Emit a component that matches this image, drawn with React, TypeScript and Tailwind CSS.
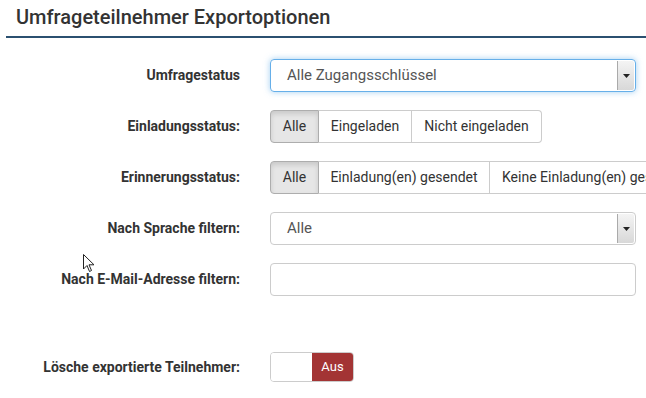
import React from "react";

const Label = ({ children }: { children: React.ReactNode }) => (
  <div className="w-[240px] shrink-0 text-right text-[14px] font-bold text-[#333] whitespace-nowrap">{children}</div>
);

const Caret = () => (
  <div className="absolute right-[1px] top-[1px] bottom-[1px] w-[17px] border-l border-[#aaa] bg-gradient-to-b from-[#f4f4f4] to-[#d8d8d8] flex items-center justify-center rounded-r-[2px]">
    <svg width="7" height="4" viewBox="0 0 7 4"><path d="M0 0h7L3.5 4z" fill="#222" /></svg>
  </div>
);

export default function App() {
  return (
    <div className="relative w-[646px] h-[398px] overflow-hidden bg-white" style={{ fontFamily: "Roboto, 'Liberation Sans', sans-serif" }}>
      <div className="pl-[6px]">
        <div className="pl-[10px] pt-[4px] h-[36px] text-[20px] font-medium text-[#333] leading-[26px] whitespace-nowrap">Umfrageteilnehmer Exportoptionen</div>
        <div className="h-[2px] bg-[#2b5070]" />
      </div>
      <div className="flex flex-col pt-[21px]">
        <div className="flex items-center h-[33px] gap-[30px]">
          <Label>Umfragestatus</Label>
          <div className="relative w-[366px] h-[33px] rounded-[4px] border border-[#66afe9] shadow-[0_0_6px_rgba(102,175,233,0.6)] flex items-center pl-[16px] text-[15px] text-[#555]">
            Alle Zugangsschlüssel
            <Caret />
          </div>
        </div>
        <div className="flex items-center h-[33px] gap-[30px] mt-[18px]">
          <Label>Einladungsstatus:</Label>
          <div className="flex h-[33px] text-[14px] text-[#333] whitespace-nowrap">
            <div className="w-[49px] flex items-center justify-center bg-[#e6e6e6] border border-[#adadad] rounded-l-[4px] shadow-[inset_0_3px_5px_rgba(0,0,0,0.125)]">Alle</div>
            <div className="w-[93px] flex items-center justify-center border-y border-r border-[#ccc]">Eingeladen</div>
            <div className="w-[130px] flex items-center justify-center border-y border-r border-[#ccc] rounded-r-[4px]">Nicht eingeladen</div>
          </div>
        </div>
        <div className="flex items-center h-[33px] gap-[30px] mt-[18px]">
          <Label>Erinnerungsstatus:</Label>
          <div className="flex h-[33px] w-[376px] overflow-hidden text-[14px] text-[#333] whitespace-nowrap">
            <div className="w-[49px] shrink-0 flex items-center justify-center bg-[#e6e6e6] border border-[#adadad] rounded-l-[4px] shadow-[inset_0_3px_5px_rgba(0,0,0,0.125)]">Alle</div>
            <div className="w-[171px] shrink-0 flex items-center justify-center border-y border-r border-[#ccc]">Einladung(en) gesendet</div>
            <div className="w-[210px] shrink-0 flex items-center pl-[12px] border-y border-r border-[#ccc] rounded-r-[4px]">Keine Einladung(en) gesendet</div>
          </div>
        </div>
        <div className="flex items-center h-[33px] gap-[30px] mt-[18px]">
          <Label>Nach Sprache filtern:</Label>
          <div className="relative w-[366px] h-[33px] rounded-[4px] border border-[#ccc] flex items-center pl-[16px] text-[15px] text-[#555]">
            Alle
            <Caret />
          </div>
        </div>
        <div className="flex items-center h-[33px] gap-[30px] mt-[18px]">
          <Label>Nach E-Mail-Adresse filtern:</Label>
          <div className="w-[366px] h-[33px] rounded-[4px] border border-[#ccc]" />
        </div>
        <div className="flex items-center h-[30px] gap-[30px] mt-[56px]">
          <Label>Lösche exportierte Teilnehmer:</Label>
          <div className="flex w-[84px] h-[30px] rounded-[4px] border border-[#ccc] overflow-hidden">
            <div className="w-[41px] bg-white" />
            <div className="flex-1 bg-[#a33434] text-white text-[13px] flex items-center justify-center">Aus</div>
          </div>
        </div>
      </div>
      <svg className="absolute left-[83px] top-[254px]" width="12" height="19" viewBox="0 0 12 19">
        <path d="M0.5 0.5 L0.5 15 L4 11.5 L6.5 17.5 L8.5 16.5 L6 10.8 L11 10.8 Z" fill="#fff" stroke="#222" strokeWidth="1" />
      </svg>
    </div>
  );
}
